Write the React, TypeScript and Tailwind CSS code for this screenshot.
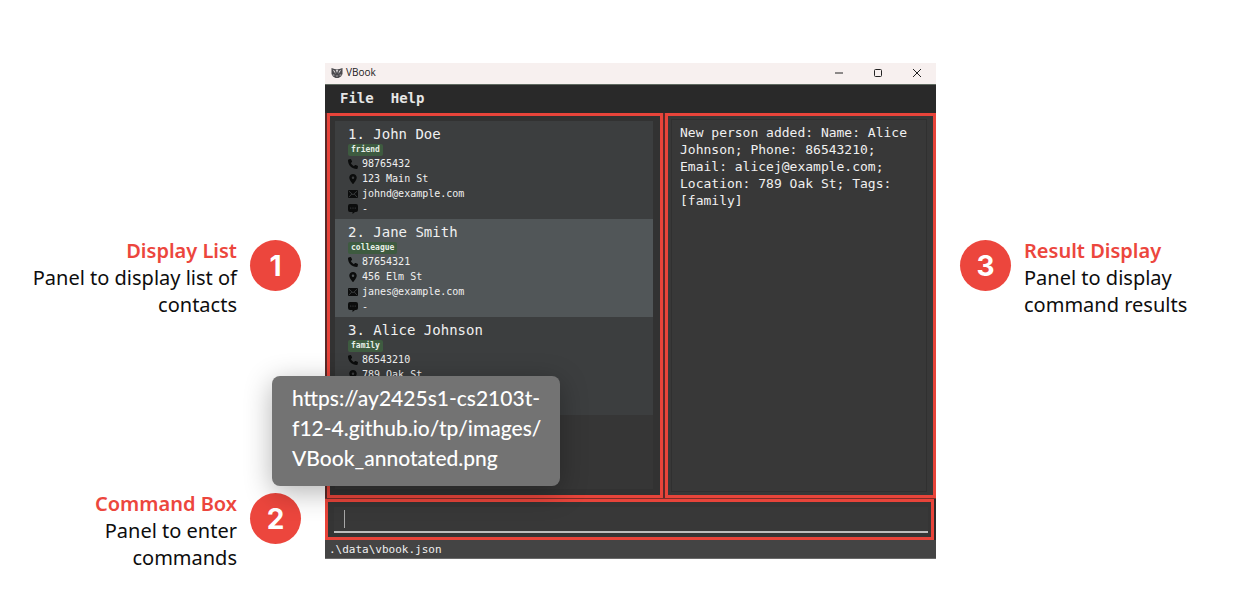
import React from "react";
import { FaPhone, FaLocationDot } from "react-icons/fa6";

type Contact = { name: string; tag: string; phone: string; address: string; email?: string; remark?: string };

const contacts: Contact[] = [
  { name: "John Doe", tag: "friend", phone: "98765432", address: "123 Main St", email: "johnd@example.com", remark: "-" },
  { name: "Jane Smith", tag: "colleague", phone: "87654321", address: "456 Elm St", email: "janes@example.com", remark: "-" },
  { name: "Alice Johnson", tag: "family", phone: "86543210", address: "789 Oak St" },
];

function MailIcon() {
  return (
    <svg viewBox="0 0 20 16" className="h-2 w-[10px]" aria-hidden="true">
      <rect width="20" height="16" rx="2" fill="#0b0c0c" />
      <path d="M2 2.5 10 9.5 18 2.5M2 14 7.5 8M18 14 12.5 8" fill="none" stroke="#4a4d4f" strokeWidth="1.4" />
    </svg>
  );
}

function ChatIcon() {
  return (
    <svg viewBox="0 0 20 20" className="size-[10px]" aria-hidden="true">
      <path d="M4 0h12a4 4 0 0 1 4 4v8a4 4 0 0 1-4 4h-2l-5 4v-4H4a4 4 0 0 1-4-4V4a4 4 0 0 1 4-4z" fill="#0b0c0c" />
      <g fill="#4a4d4f">
        <circle cx="5.5" cy="8" r="1.2" />
        <circle cx="10" cy="8" r="1.2" />
        <circle cx="14.5" cy="8" r="1.2" />
      </g>
    </svg>
  );
}

function AppLogo() {
  return (
    <svg viewBox="0 0 24 24" className="size-3" aria-hidden="true">
      <path d="M1 2 7 4h10l6-2v12l-3 5-5 3H9l-5-3-3-5z" fill="#4b4a4e" />
      <path d="M3 5 8 8l1 6zM21 5l-5 3-1 6zM9 5l3 7 3-7z" fill="#d0cccd" />
      <path d="M3 14l5 2-3 2zM21 14l-5 2 3 2zM9 17h6l-3 3z" fill="#a5a1a3" />
    </svg>
  );
}

function Detail({ icon, children }: { icon: React.ReactNode; children: React.ReactNode }) {
  return (
    <li className="flex h-[15px] items-center gap-1">
      <span className="flex w-[10px] justify-center text-[#0b0c0c]">{icon}</span>
      {children}
    </li>
  );
}

function ContactCard({ contact, index }: { contact: Contact; index: number }) {
  return (
    <li className="min-h-[98px] px-[13px] pt-1 pb-[3px] odd:bg-[#3c3e3f] even:bg-[#515658]">
      <h2 className="text-[14px] leading-[19px] text-[#f0f0f0]">
        {index}. {contact.name}
      </h2>
      <div className="flex h-3">
        <span className="rounded-xs bg-[#3e5b40] px-[3px] text-[8px] leading-3 font-bold text-[#e8efe8]">{contact.tag}</span>
      </div>
      <ul className="text-[10px] leading-[15px] text-[#f0f0f0]">
        <Detail icon={<FaPhone className="size-[10px]" />}>{contact.phone}</Detail>
        <Detail icon={<FaLocationDot className="size-[10px]" />}>{contact.address}</Detail>
        {contact.email && <Detail icon={<MailIcon />}>{contact.email}</Detail>}
        {contact.remark && <Detail icon={<ChatIcon />}>{contact.remark}</Detail>}
      </ul>
    </li>
  );
}

function Badge({ n }: { n: number }) {
  return (
    <span className="flex size-[51px] shrink-0 items-center justify-center rounded-full bg-[#ec463d] font-[Inter] text-[28px] font-bold text-white">
      {n}
    </span>
  );
}

function Note({ title, lines }: { title: string; lines: string[] }) {
  return (
    <div className="text-[20px] leading-[27px] whitespace-nowrap text-[#0d0d0d]">
      <h3 className="font-semibold text-[#ec463d]">{title}</h3>
      <p>
        {lines.map((line) => (
          <span key={line} className="block">
            {line}
          </span>
        ))}
      </p>
    </div>
  );
}

function AppWindow() {
  return (
    <section className="bg-[#2b2b2b] font-['DejaVu_Sans_Mono',monospace] text-[#f0f0f0]">
      <header className="flex h-[21px] items-center bg-[#f7f0ef] pb-[2px] pl-[6px] text-[#222222]">
        <AppLogo />
        <h1 className="ml-[3px] flex-1 font-['Open_Sans',sans-serif] text-[10px]">VBook</h1>
        <div className="flex items-center">
          <button aria-label="Minimize" className="flex w-[39px] justify-center">
            <svg viewBox="0 0 10 10" className="size-[10px]"><path d="M1 5h8" stroke="currentColor" /></svg>
          </button>
          <button aria-label="Maximize" className="flex w-[39px] justify-center">
            <svg viewBox="0 0 10 10" className="size-[10px]"><rect x="1.5" y="1.5" width="7" height="7" rx="1" fill="none" stroke="currentColor" /></svg>
          </button>
          <button aria-label="Close" className="flex w-[39px] justify-center">
            <svg viewBox="0 0 10 10" className="size-[10px]"><path d="M1 1l8 8M9 1 1 9" stroke="currentColor" /></svg>
          </button>
        </div>
      </header>
      <nav className="flex h-[29px] items-center gap-[17px] border-t border-[#5f6a60] bg-[#292929] px-[15px] pb-[2px] text-[14px] font-bold text-[#e6e6e6]">
        <button>File</button>
        <button>Help</button>
      </nav>
      <div className="grid grid-cols-[336fr_271fr] gap-[2px] bg-[#5a2b29] pl-[2px]">
        <div className="border-[3px] border-[#e8443a] bg-[#323232] pt-[5px] pr-[7px] pb-[6px] pl-[5px]">
          <ul className="h-[368px] bg-[#363636]">
            {contacts.map((c, i) => (
              <ContactCard key={c.name} contact={c} index={i + 1} />
            ))}
          </ul>
        </div>
        <div className="flex border-[3px] border-[#e8443a] bg-[#383838] py-[3px] pr-[6px] pl-[3px]">
          <p className="flex-1 border border-[#303030] pt-1 pl-2 text-[13px] leading-[17px]">
            New person added: Name: Alice Johnson; Phone: 86543210; Email: alicej@example.com; Location: 789 Oak St; Tags: [family]
          </p>
        </div>
      </div>
      <div className="border-t border-[#7a2d29] bg-[#2b2b2b] pr-[2px]">
        <div className="border-[3px] border-[#e8443a] bg-[#353535] pt-[5px] pr-[3px] pb-1 pl-[6px]">
          <div className="flex h-[26px] items-center border-b-2 border-[#bdbdbd] bg-[#383838] pl-[10px]">
            <span className="h-[18px] w-px bg-[#a8a8a8]" />
            <input aria-label="Command" className="min-w-0 flex-1 bg-transparent text-[14px] outline-none" />
          </div>
        </div>
      </div>
      <footer className="h-[19px] border-b border-[#6a6a6a] bg-[#444444] pl-1 text-[11px] leading-[19px]">.\data\vbook.json</footer>
    </section>
  );
}

export default function App() {
  return (
    <main className="grid min-h-screen grid-cols-[325fr_611fr_306fr] items-start bg-white pt-[63px] font-['Noto_Sans',sans-serif]">
      <aside className="flex flex-col items-end gap-[172px] pt-[174px] pr-6 text-right">
        <div className="flex items-start gap-[13px]">
          <Note title="Display List" lines={["Panel to display list of", "contacts"]} />
          <div className="pt-[3px]"><Badge n={1} /></div>
        </div>
        <div className="flex items-start gap-[13px]">
          <Note title="Command Box" lines={["Panel to enter", "commands"]} />
          <div className="pt-[3px]"><Badge n={2} /></div>
        </div>
      </aside>
      <div className="relative min-w-0">
        <AppWindow />
        <div
          role="tooltip"
          className="absolute top-[313px] left-[-53px] w-72 rounded-lg bg-[#737373] px-5 pt-[7px] pb-[13px] font-[Lato,sans-serif] text-[21px] leading-[30px] font-medium whitespace-nowrap text-white shadow-[0_6px_28px_rgba(0,0,0,0.3)]"
        >
          https://ay2425s1-cs2103t-
          <br />
          f12-4.github.io/tp/images/
          <br />
          VBook_annotated.png
        </div>
      </div>
      <aside className="flex items-start gap-[13px] pt-[174px] pl-6">
        <div className="pt-[3px]"><Badge n={3} /></div>
        <Note title="Result Display" lines={["Panel to display", "command results"]} />
      </aside>
    </main>
  );
}
